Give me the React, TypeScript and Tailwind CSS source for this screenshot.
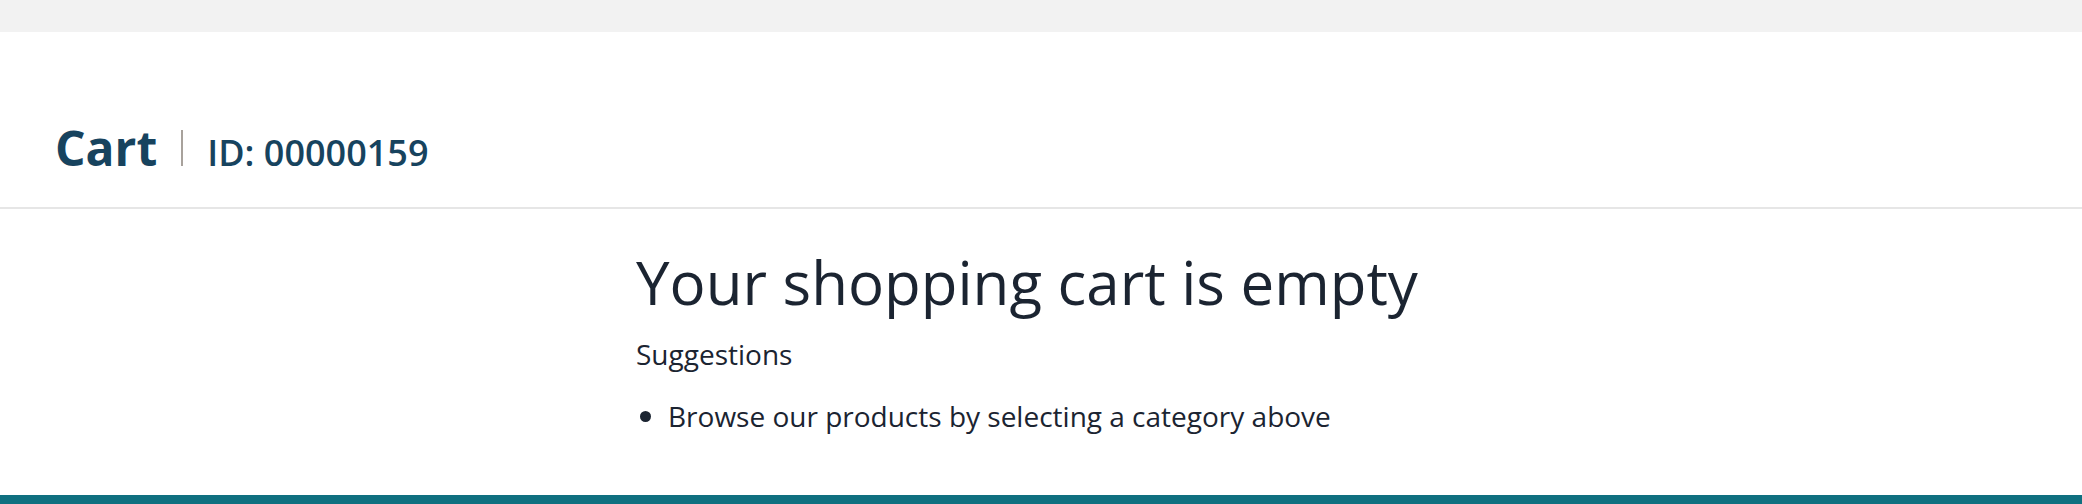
const SUGGESTIONS = ['Browse our products by selecting a category above']

export default function App() {
  return (
    <div className="h-screen flex flex-col bg-white" style={{ fontFamily: '"Open Sans", "Liberation Sans", sans-serif' }}>
      <div className="h-8 bg-[#f2f2f2]" />

      <header className="flex items-baseline pl-[55px] pt-[92px] pb-[35px] border-b-2 border-[#e6e6e6]">
        <h1 className="text-[48px] leading-none font-bold text-[#17435e]">Cart</h1>
        <span className="inline-block h-[36px] mb-[-2px] mx-[24px] border-l-2 border-[#a8a29c]" />
        <span className="text-[36px] leading-none font-semibold text-[#17435e]">ID: 00000159</span>
      </header>

      <main className="flex-1">
        <div className="w-[810px] mx-auto pt-[43px]">
          <h2 className="text-[60px] leading-none text-[#1b2431]">Your shopping cart is empty</h2>
          <p className="mt-[28px] text-[28px] leading-none text-[#1b2431]">Suggestions</p>
          <ul className="mt-[34px]">
            {SUGGESTIONS.map((s) => (
              <li key={s} className="flex items-center text-[28px] leading-none text-[#1b2431]">
                <span className="w-[11px] h-[11px] rounded-full bg-[#1b2431] ml-[4px] mr-[17px]" />
                {s}
              </li>
            ))}
          </ul>
        </div>
      </main>

      <footer className="h-[9px] bg-[#0f7080]" />
    </div>
  )
}
